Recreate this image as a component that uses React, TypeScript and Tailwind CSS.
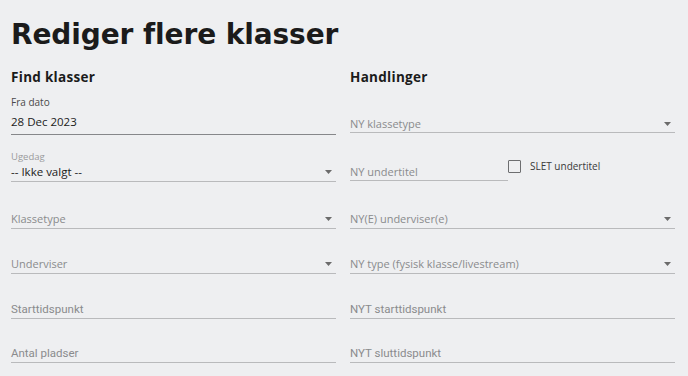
const mont = "font-['Open_Sans',sans-serif]";
const head = "font-['DejaVu_Sans','Open_Sans',sans-serif]";
const robo = "font-['Roboto',sans-serif]";

function Caret() {
  return (
    <svg width="7" height="4" viewBox="0 0 7 4" className="mb-[6px] mr-[4px] shrink-0">
      <path d="M0 0h7L3.5 4z" fill="#6b6b6b" />
    </svg>
  );
}

function Field({
  h,
  text,
  caret,
  font = mont,
  size = "text-[11px]",
  pb = "pb-[1px]",
}: {
  h: string;
  text: string;
  caret?: boolean;
  font?: string;
  size?: string;
  pb?: string;
}) {
  return (
    <div className={`${h} flex items-end justify-between border-b border-[#b9babc] ${pb}`}>
      <span className={`${font} ${size} leading-[16px] text-[#8a8b8d]`}>{text}</span>
      {caret && <Caret />}
    </div>
  );
}

export default function App() {
  return (
    <div className="min-h-screen w-full bg-[#eeeff1] px-[11px] pt-[15px] text-[#1b1b1b]">
      <h1 className={`${head} text-[28px] font-bold leading-[40px] tracking-[-0.1px]`}>
        Rediger flere klasser
      </h1>

      <div className="mt-[12px] grid grid-cols-2 gap-x-[14px] pr-[2px]">
        {/* Find klasser */}
        <div className="flex flex-col">
          <h2 className={`${mont} text-[13.5px] font-bold leading-[20px] tracking-[0.3px]`}>
            Find klasser
          </h2>

          <div className="flex h-[48px] flex-col justify-end border-b border-[#86878a] pb-[3px]">
            <span className={`${mont} text-[10px] leading-[14px] text-[#4a4a4a]`}>Fra dato</span>
            <span className={`${mont} mt-[4px] text-[11.5px] leading-[18px]`}>28 Dec 2023</span>
          </div>

          <div className="flex h-[47px] flex-col justify-end border-b border-[#b9babc] pb-[1px]">
            <span className={`${mont} text-[9.5px] leading-[12px] text-[#9a9b9d]`}>Ugedag</span>
            <div className="mt-[1px] flex items-end justify-between">
              <span className={`${mont} text-[11.5px] leading-[16px]`}>-- Ikke valgt --</span>
              <Caret />
            </div>
          </div>

          <Field h="h-[47px]" text="Klassetype" caret />
          <Field h="h-[45px]" text="Underviser" caret />
          <Field h="h-[45px]" text="Starttidspunkt" font={robo} size="text-[11.5px]" />
          <Field h="h-[44px]" text="Antal pladser" font={robo} size="text-[11.5px]" />
        </div>

        {/* Handlinger */}
        <div className="flex flex-col">
          <h2 className={`${mont} text-[13.5px] font-bold leading-[20px] tracking-[0.3px]`}>
            Handlinger
          </h2>

          <Field h="h-[46px]" text="NY klassetype" caret pb="pb-0" />

          <div className="flex h-[48px] items-stretch">
            <div className="flex w-[158px] items-end border-b border-[#b9babc]">
              <span className={`${mont} text-[11px] leading-[16px] text-[#8a8b8d]`}>NY undertitel</span>
            </div>
            <label className="flex items-start pt-[27px]">
              <span className="h-[13px] w-[13px] rounded-[1px] border-[1.5px] border-[#6d6e70]" />
              <span className={`${mont} ml-[9px] mt-[-1px] text-[10px] leading-[14px] text-[#3a3a3a]`}>
                SLET undertitel
              </span>
            </label>
          </div>

          <Field h="h-[48px]" text="NY(E) underviser(e)" caret />
          <Field h="h-[45px]" text="NY type (fysisk klasse/livestream)" caret />
          <Field h="h-[45px]" text="NYT starttidspunkt" font={robo} size="text-[11.5px]" />
          <Field h="h-[44px]" text="NYT sluttidspunkt" font={robo} size="text-[11.5px]" />
        </div>
      </div>
    </div>
  );
}
